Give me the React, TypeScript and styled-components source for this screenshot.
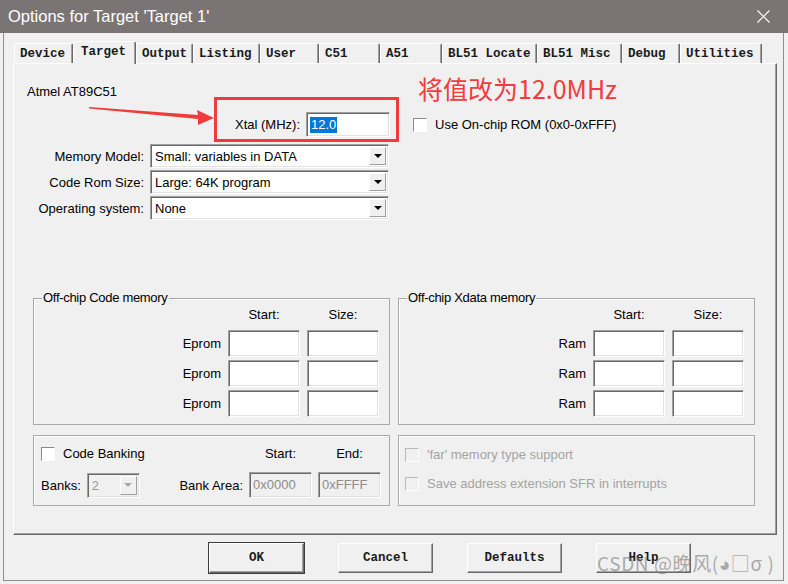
import React from "react";
import styled, { createGlobalStyle, css } from "styled-components";

const GlobalStyle = createGlobalStyle`
  body {
    margin: 0;
    background: #f0f0f0;
    font-family: "Liberation Sans", Arial, sans-serif;
  }
`;

const Window = styled.div`
  position: relative;
  width: 788px;
  height: 584px;
  display: flex;
  flex-direction: column;
  background: #f0f0f0;
  overflow: hidden;
`;

const TitleBar = styled.div`
  height: 33px;
  flex-shrink: 0;
  display: flex;
  align-items: center;
  justify-content: space-between;
  padding: 0 18px 0 8px;
  background: #7a7574;
  color: #fff;
  font-size: 16.5px;
`;

const Client = styled.div`
  flex: 1;
  margin: 0 4px 3px 3px;
  border: 1px solid #8f8f8f;
  border-top: none;
  display: flex;
  flex-direction: column;
`;

const TabStrip = styled.div`
  display: flex;
  align-items: flex-end;
  height: 22px;
  margin: 8px 0 0 10px;
`;

const Tab = styled.div<{ $w: number; $active?: boolean }>`
  width: ${(p) => p.$w}px;
  height: 20px;
  box-sizing: border-box;
  padding: 3px 0 0 5px;
  border-top: 1px solid #fff;
  border-left: 1px solid #fff;
  border-right: 1px solid #696969;
  box-shadow: inset -1px 0 0 #a0a0a0;
  border-radius: 2px 2px 0 0;
  font-family: "Liberation Mono", "Courier New", monospace;
  font-size: 12.5px;
  font-weight: bold;
  color: #1a1a1a;
  white-space: nowrap;
  ${(p) =>
    p.$active &&
    css`
      height: 23px;
      margin-bottom: -1px;
      padding: 3px 0 0 7px;
      background: #f0f0f0;
      position: relative;
      z-index: 1;
    `}
`;

const Panel = styled.div`
  position: relative;
  width: 764px;
  height: 472px;
  box-sizing: border-box;
  margin-left: 9px;
  padding-top: 20px;
  border-top: 1px solid #fff;
  border-left: 1px solid #fff;
  border-right: 1px solid #696969;
  border-bottom: 1px solid #696969;
  box-shadow: inset -1px -1px 0 #a0a0a0;
  display: flex;
  flex-direction: column;
  font-size: 13px;
  color: #000;
`;

const DeviceName = styled.div`
  margin-left: 13px;
  line-height: 16px;
`;

const XtalRow = styled.div`
  display: flex;
  align-items: center;
  height: 25px;
  margin-top: 12px;
`;

const RightLabel = styled.span<{ $w: number }>`
  width: ${(p) => p.$w}px;
  text-align: right;
  flex-shrink: 0;
  white-space: nowrap;
`;

const sunken = css`
  box-sizing: border-box;
  border-top: 1px solid #a0a0a0;
  border-left: 1px solid #a0a0a0;
  border-right: 1px solid #fff;
  border-bottom: 1px solid #fff;
  box-shadow: inset 1px 1px 0 #696969, inset -1px -1px 0 #e3e3e3;
`;

const TextBox = styled.div<{ $w: number; $h?: number; $disabled?: boolean }>`
  ${sunken};
  width: ${(p) => p.$w}px;
  height: ${(p) => p.$h ?? 27}px;
  background: ${(p) => (p.$disabled ? "#f0f0f0" : "#fff")};
  color: ${(p) => (p.$disabled ? "#8d8d8d" : "#000")};
  padding: 4px 0 0 3px;
  display: flex;
  align-items: flex-start;
  line-height: 16px;
`;

const Selected = styled.span`
  background: #0078d7;
  color: #fff;
  padding: 0 1px;
`;

const CheckBox = styled.span<{ $disabled?: boolean }>`
  width: 14px;
  height: 14px;
  flex-shrink: 0;
  box-sizing: border-box;
  border-top: 1px solid ${(p) => (p.$disabled ? "#b9b9b9" : "#8a8a8a")};
  border-left: 1px solid ${(p) => (p.$disabled ? "#b9b9b9" : "#8a8a8a")};
  border-right: 1px solid #fff;
  border-bottom: 1px solid #fff;
  background: ${(p) => (p.$disabled ? "#f0f0f0" : "#fff")};
`;

const CheckRow = styled.div<{ $disabled?: boolean }>`
  display: flex;
  align-items: center;
  gap: 8px;
  line-height: 16px;
  color: ${(p) => (p.$disabled ? "#a3a3a3" : "#000")};
`;

const FormRows = styled.div`
  display: flex;
  flex-direction: column;
  gap: 2px;
  margin-top: 7px;
`;

const FormRow = styled.div`
  display: flex;
  align-items: center;
  gap: 6px;
`;

const SelectBox = styled.div<{ $w: number; $h: number; $disabled?: boolean }>`
  ${sunken};
  width: ${(p) => p.$w}px;
  height: ${(p) => p.$h}px;
  display: flex;
  align-items: center;
  justify-content: space-between;
  padding: 0 2px 0 4px;
  background: ${(p) => (p.$disabled ? "#f0f0f0" : "#fff")};
  color: ${(p) => (p.$disabled ? "#9a9a9a" : "#000")};
`;

const DropButton = styled.span<{ $disabled?: boolean }>`
  width: 17px;
  height: calc(100% - 4px);
  box-sizing: border-box;
  display: flex;
  align-items: center;
  justify-content: center;
  background: #f0f0f0;
  border-top: 1px solid #fff;
  border-left: 1px solid #fff;
  border-right: 1px solid #a0a0a0;
  border-bottom: 1px solid #a0a0a0;
  &::after {
    content: "";
    border-left: 4px solid transparent;
    border-right: 4px solid transparent;
    border-top: 4px solid ${(p) => (p.$disabled ? "#a8a8a8" : "#000")};
  }
`;

const GroupRow = styled.div<{ $top: number; $h: number }>`
  display: flex;
  gap: 8px;
  margin-top: ${(p) => p.$top}px;
  padding-left: 19px;
  height: ${(p) => p.$h}px;
`;

const GroupBox = styled.div`
  position: relative;
  width: 357px;
  height: 100%;
  box-sizing: border-box;
  border: 1px solid #a9a9a9;
  box-shadow: inset 1px 1px 0 #fff;
`;

const Legend = styled.span`
  position: absolute;
  top: -9px;
  left: 8px;
  padding: 0 1px;
  background: #f0f0f0;
  line-height: 16px;
  letter-spacing: -0.3px;
`;

const MemGrid = styled.div`
  display: grid;
  grid-template-columns: auto 72px 72px;
  column-gap: 7px;
  row-gap: 3px;
  justify-content: end;
  align-items: center;
  padding: 8px 10px 0 0;
`;

const ColHead = styled.span<{ $mb?: number }>`
  text-align: center;
  line-height: 16px;
  margin-bottom: ${(p) => p.$mb ?? 0}px;
`;

const BankGrid = styled.div`
  display: grid;
  grid-template-columns: 1fr auto 63px 63px;
  grid-template-rows: 16px 26px;
  column-gap: 6px;
  row-gap: 10px;
  align-items: center;
  padding: 10px 8px 0 7px;
`;

const BanksCell = styled.div`
  display: flex;
  align-items: center;
  gap: 6px;
`;

const OptionList = styled.div`
  display: flex;
  flex-direction: column;
  gap: 13px;
  padding: 11px 0 0 6px;
`;

const ButtonBar = styled.div`
  display: flex;
  gap: 34px;
  margin-top: 8px;
  padding-left: 205px;
`;

const Button = styled.div<{ $default?: boolean }>`
  width: 95px;
  height: 30px;
  box-sizing: border-box;
  display: flex;
  align-items: center;
  justify-content: center;
  font-family: "Liberation Mono", "Courier New", monospace;
  font-size: 12.5px;
  font-weight: bold;
  color: #1a1a1a;
  background: #f0f0f0;
  border-top: 1px solid #fff;
  border-left: 1px solid #fff;
  border-right: 1px solid #696969;
  border-bottom: 1px solid #696969;
  box-shadow: inset -1px -1px 0 #a0a0a0;
  ${(p) =>
    p.$default &&
    css`
      outline: 1px solid #3c3c3c;
    `}
`;

const Annotation = styled.span`
  position: absolute;
  left: 404px;
  top: 10px;
  font-family: "Noto Sans CJK SC", "Noto Sans", sans-serif;
  font-size: 25px;
  line-height: 28px;
  color: #f23b3b;
  white-space: nowrap;
`;

const RedFrame = styled.div`
  position: absolute;
  left: 200px;
  top: 33px;
  width: 185px;
  height: 45px;
  box-sizing: border-box;
  border: 3px solid #ef3b3b;
`;

const ArrowLayer = styled.svg`
  position: absolute;
  left: 0;
  top: 0;
  pointer-events: none;
`;

const Watermark = styled.span`
  position: absolute;
  left: 597px;
  top: 550px;
  font-family: "Noto Sans CJK SC", "Noto Sans", sans-serif;
  font-size: 19px;
  line-height: 26px;
  letter-spacing: 0.6px;
  color: rgba(120, 120, 120, 0.6);
  white-space: nowrap;
`;

const tabs: [string, number][] = [
  ["Device", 59],
  ["Target", 63],
  ["Output", 57],
  ["Listing", 67],
  ["User", 59],
  ["C51", 61],
  ["A51", 62],
  ["BL51 Locate", 95],
  ["BL51 Misc", 85],
  ["Debug", 58],
  ["Utilities", 82],
];

const selects = [
  ["Memory Model:", "Small: variables in DATA"],
  ["Code Rom Size:", "Large: 64K program"],
  ["Operating system:", "None"],
];

const MemoryGroup = ({ title, label }: { title: string; label: string }) => (
  <GroupBox>
    <Legend>{title}</Legend>
    <MemGrid>
      <span />
      <ColHead $mb={4}>Start:</ColHead>
      <ColHead $mb={4}>Size:</ColHead>
      {[0, 1, 2].map((i) => (
        <React.Fragment key={i}>
          <span>{label}</span>
          <TextBox $w={72} />
          <TextBox $w={72} />
        </React.Fragment>
      ))}
    </MemGrid>
  </GroupBox>
);

export default function App() {
  return (
    <Window>
      <GlobalStyle />
      <TitleBar>
        <span>Options for Target 'Target 1'</span>
        <svg width="13" height="13" viewBox="0 0 13 13">
          <path d="M0.5 0.5 L12.5 12.5 M12.5 0.5 L0.5 12.5" stroke="#fff" strokeWidth="1.2" />
        </svg>
      </TitleBar>
      <Client>
        <TabStrip>
          {tabs.map(([name, w]) => (
            <Tab key={name} $w={w} $active={name === "Target"}>
              {name}
            </Tab>
          ))}
        </TabStrip>
        <Panel>
          <DeviceName>Atmel AT89C51</DeviceName>
          <XtalRow>
            <RightLabel $w={286}>Xtal (MHz):</RightLabel>
            <TextBox $w={84} $h={25} style={{ marginLeft: 6 }}>
              <Selected>12.0</Selected>
            </TextBox>
            <CheckRow style={{ marginLeft: 23 }}>
              <CheckBox />
              Use On-chip ROM (0x0-0xFFF)
            </CheckRow>
          </XtalRow>
          <FormRows>
            {selects.map(([label, value]) => (
              <FormRow key={label}>
                <RightLabel $w={130}>{label}</RightLabel>
                <SelectBox $w={239} $h={24}>
                  <span>{value}</span>
                  <DropButton />
                </SelectBox>
              </FormRow>
            ))}
          </FormRows>

          <GroupRow $top={78} $h={127}>
            <MemoryGroup title="Off-chip Code memory" label="Eprom" />
            <MemoryGroup title="Off-chip Xdata memory" label="Ram" />
          </GroupRow>

          <GroupRow $top={10} $h={71}>
            <GroupBox>
              <BankGrid>
                <CheckRow>
                  <CheckBox />
                  Code Banking
                </CheckRow>
                <span />
                <ColHead>Start:</ColHead>
                <ColHead>End:</ColHead>
                <BanksCell>
                  Banks:
                  <SelectBox $w={53} $h={25} $disabled>
                    <span>2</span>
                    <DropButton $disabled />
                  </SelectBox>
                </BanksCell>
                <span>Bank Area:</span>
                <TextBox $w={63} $h={26} $disabled>0x0000</TextBox>
                <TextBox $w={63} $h={26} $disabled>0xFFFF</TextBox>
              </BankGrid>
            </GroupBox>
            <GroupBox>
              <OptionList>
                <CheckRow $disabled>
                  <CheckBox $disabled />
                  'far' memory type support
                </CheckRow>
                <CheckRow $disabled>
                  <CheckBox $disabled />
                  Save address extension SFR in interrupts
                </CheckRow>
              </OptionList>
            </GroupBox>
          </GroupRow>

          <Annotation>将值改为12.0MHz</Annotation>
          <RedFrame />
          <ArrowLayer width="220" height="80" viewBox="0 0 220 80">
            <polygon
              points="75,43 184,51 183,46 200,54 184,61 184,55 75,44.5"
              fill="#ef3b3b"
            />
          </ArrowLayer>
        </Panel>
        <ButtonBar>
          <Button $default>OK</Button>
          <Button>Cancel</Button>
          <Button>Defaults</Button>
          <Button>Help</Button>
        </ButtonBar>
      </Client>
      <Watermark>CSDN @晚风(◕□σ )</Watermark>
    </Window>
  );
}
